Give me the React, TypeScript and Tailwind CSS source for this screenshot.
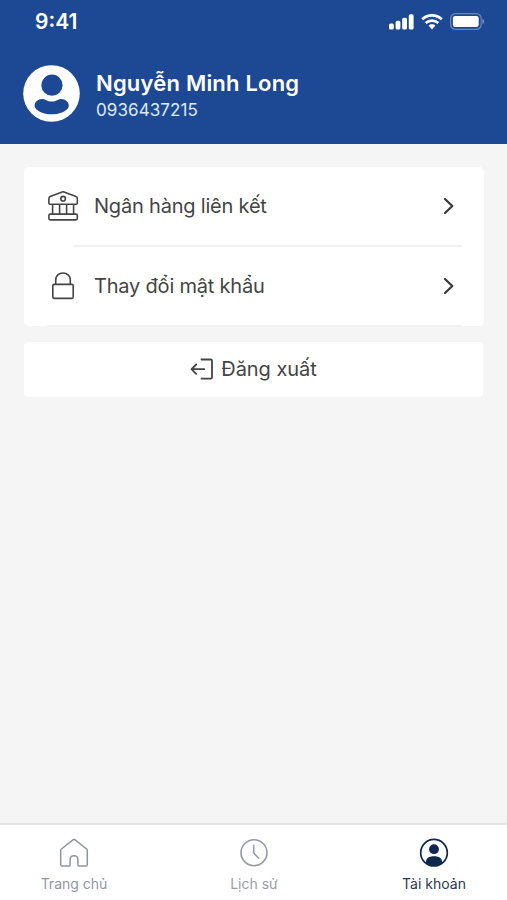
import type { ReactNode } from 'react';

function SignalIcon() {
  return (
    <svg className="block h-[16px] w-[25px]" viewBox="0 0 25 16" fill="#fff">
      <rect x="0" y="9.6" width="4.8" height="6" rx="1.6" />
      <rect x="6.6" y="6.8" width="4.8" height="8.8" rx="1.6" />
      <rect x="13.2" y="3.7" width="4.8" height="11.9" rx="1.6" />
      <rect x="19.8" y="0.3" width="4.8" height="15.3" rx="1.6" />
    </svg>
  );
}

function WifiIcon() {
  return (
    <svg className="block h-[16px] w-[22px]" viewBox="0 0 22 16" fill="none" stroke="#fff" strokeWidth="2.7">
      <path d="M1.200 5.200C6.800 0 15.200 0 20.800 5.200" />
      <path d="M4.700 9c3.500-3.100 9.100-3.100 12.600 0" />
      <path d="M11 10.300c-1.300 0-2.500.5-3.400 1.300L11 15.500l3.400-3.900c-.9-.8-2.100-1.300-3.400-1.300Z" fill="#fff" stroke="none" />
    </svg>
  );
}

function BatteryIcon() {
  return (
    <svg className="block h-[17px] w-[35px]" viewBox="0 0 35 17" fill="none">
      <rect x="0.6" y="0.6" width="30.6" height="15.8" rx="4.8" stroke="#fff" strokeOpacity=".35" strokeWidth="1.2" />
      <rect x="2.9" y="2.9" width="25.8" height="11.2" rx="2.4" fill="#fff" />
      <path d="M32.500 5.800v5.400c2.400-1 2.400-4.400 0-5.400Z" fill="#fff" fillOpacity=".4" />
    </svg>
  );
}

function Avatar() {
  return (
    <svg className="block size-[57px]" viewBox="0 0 57 57">
      <circle cx="28.5" cy="28.5" r="28.3" fill="#fff" />
      <circle cx="29" cy="20.2" r="10.6" fill="#1d4994" />
      <path
        d="M19.200 34c3.400 0 4.700 2.600 9.500 2.600s6.100-2.600 9.500-2.600c4.200 0 7.600 3 7.600 6.700 0 4.900-9.200 8.600-17.100 8.600s-17.100-3.700-17.100-8.600c0-3.700 3.400-6.700 7.600-6.700Z"
        fill="#1d4994"
      />
    </svg>
  );
}

function BankIcon() {
  return (
    <svg className="block size-[32px]" viewBox="0 0 32 32" fill="none" stroke="#444" strokeWidth="1.6" strokeLinejoin="round">
      <path d="M2.900 14.300h26.400c.6 0 1-.4 1-1V8.400c0-.9-.5-1.500-1.300-1.800L17 2c-.6-.2-1.200-.2-1.800 0L3.200 6.600C2.400 6.900 1.900 7.500 1.900 8.400v4.900c0 .6.4 1 1 1Z" />
      <circle cx="16.100" cy="8.700" r="2.300" />
      <path d="M5.600 14.300v9.700M12.600 14.300v9.700M19.600 14.300v9.700M26.600 14.300v9.700" />
      <rect x="1.900" y="24.100" width="28.400" height="5.800" rx="1.300" />
    </svg>
  );
}

function LockIcon() {
  return (
    <svg className="block size-[32px]" viewBox="0 0 32 32" fill="none" stroke="#444" strokeWidth="1.6">
      <rect x="5.800" y="14.400" width="20.400" height="14" rx="1.300" />
      <path d="M8.700 14.400V10c0-4.200 3.200-7 7.300-7s7.300 2.800 7.300 7v4.400" />
    </svg>
  );
}

function Chevron() {
  return (
    <svg className="block h-[18px] w-[12px]" viewBox="0 0 12 18" fill="none" stroke="#383838" strokeWidth="2.200" strokeLinecap="round" strokeLinejoin="round">
      <path d="m2 2 7.300 7L2 16" />
    </svg>
  );
}

function LogoutIcon() {
  return (
    <svg className="block size-[24px]" viewBox="0 0 24 24" fill="none" stroke="#444" strokeWidth="1.8" strokeLinecap="round" strokeLinejoin="round">
      <path d="M11.500 2.500h9.300c.7 0 1.200.5 1.200 1.200v16.800c0 .7-.5 1.200-1.200 1.200h-9.300" />
      <path d="M14.200 12.200H1.800M6.200 7.500l-4.700 4.700 4.700 4.700" />
    </svg>
  );
}

function HomeIcon() {
  return (
    <svg className="block size-[30px]" viewBox="0 0 30 30" fill="none" stroke="#8e94a6" strokeWidth="1.500" strokeLinejoin="round">
      <path d="M1.700 12.400c0-.6.2-1 .7-1.400L14.200 1.700c.5-.4 1.100-.4 1.600 0L27.600 11c.5.4.7.8.7 1.400v14.100c0 .9-.7 1.500-1.500 1.500h-7c-.5 0-.9-.4-.9-.9v-5.400c0-2.300-1.600-4-3.900-4s-3.900 1.700-3.900 4v5.400c0 .5-.4.9-.9.9h-7c-.8 0-1.500-.6-1.500-1.500Z" />
    </svg>
  );
}

function ClockIcon() {
  return (
    <svg className="block size-[30px]" viewBox="0 0 30 30" fill="none" stroke="#969ba6" strokeWidth="1.600" strokeLinecap="round" strokeLinejoin="round">
      <circle cx="15" cy="14.700" r="13" />
      <path d="M14.700 7.200v7.800l5 5.200" />
    </svg>
  );
}

function AccountIcon() {
  return (
    <svg className="block size-[30px]" viewBox="0 0 30 30">
      <circle cx="15" cy="14.700" r="13.300" fill="none" stroke="#10284e" strokeWidth="1.700" />
      <circle cx="15" cy="11.200" r="4.900" fill="#10284e" />
      <path d="M7 25.200v-1.500c0-3.400 2.700-5.500 8-5.500s8 2.100 8 5.500v1.500c-4.700 3.800-11.300 3.800-16 0Z" fill="#10284e" />
    </svg>
  );
}

function MenuRow({ icon, label }: { icon: ReactNode; label: string }) {
  return (
    <button className="flex h-[80px] w-full items-center pr-[29px] pl-[23px] text-left">
      {icon}
      <span className="ml-[15px] flex-1 text-[20px] leading-[28px] tracking-[-0.2px] whitespace-nowrap">{label}</span>
      <Chevron />
    </button>
  );
}

function NavItem({ icon, label, color }: { icon: ReactNode; label: string; color: string }) {
  return (
    <button className={`flex w-[120px] flex-col items-center pt-[13px] ${color}`}>
      {icon}
      <span className="mt-[6px] text-[14px] leading-[20px] whitespace-nowrap">{label}</span>
    </button>
  );
}

export default function App() {
  return (
    <div className="flex h-[900px] w-[507px] flex-col overflow-hidden bg-[#f5f5f5] font-['Inter','Liberation_Sans',sans-serif] text-[#444]">
      <header className="h-[144px] shrink-0 bg-[#1d4994] text-white">
        <div className="flex h-[43px] items-center justify-between pr-[22px] pl-[35px]">
          <span className="text-[21px] leading-[28px] font-semibold">9:41</span>
          <div className="flex items-center gap-[7px]">
            <SignalIcon />
            <WifiIcon />
            <BatteryIcon />
          </div>
        </div>
        <div className="flex items-center pt-[22px] pl-[23px]">
          <Avatar />
          <div className="ml-[16px] pt-[3px]">
            <h1 className="text-[22px] leading-[30px] font-semibold tracking-[0.2px] whitespace-nowrap">Nguyễn Minh Long</h1>
            <p className="text-[17px] leading-[24px] tracking-[0.08px] text-[#dfe9fa]">0936437215</p>
          </div>
        </div>
      </header>

      <main className="flex flex-1 flex-col gap-[16px] pt-[23px] pr-[23px] pl-[24px]">
        <section className="h-[159px] rounded-[5px] bg-white">
          <div className="-mt-px">
            <MenuRow icon={<BankIcon />} label="Ngân hàng liên kết" />
            <div className="-mt-[2px] mr-[22px] ml-[49px] h-[2px] translate-y-px bg-[#f1f1f1]" />
            <MenuRow icon={<LockIcon />} label="Thay đổi mật khẩu" />
            <div className="-mt-px mr-[22px] ml-[23px] h-[2px] bg-[#f3f3f3]" />
          </div>
        </section>
        <button className="mr-px flex h-[55px] items-center justify-center gap-[7px] rounded-[4px] bg-white pb-[2px]">
          <LogoutIcon />
          <span className="text-[20px] leading-[28px] tracking-[-0.05px]">Đăng xuất</span>
        </button>
      </main>

      <nav className="flex h-[77px] shrink-0 justify-between border-t-[2px] border-[#e3e4e6] bg-white pr-[13px] pl-[14px]">
        <NavItem icon={<HomeIcon />} label="Trang chủ" color="text-[#9297a5]" />
        <NavItem icon={<ClockIcon />} label="Lịch sử" color="text-[#999da8]" />
        <NavItem icon={<AccountIcon />} label="Tài khoản" color="text-[#2b3a58]" />
      </nav>
    </div>
  );
}
